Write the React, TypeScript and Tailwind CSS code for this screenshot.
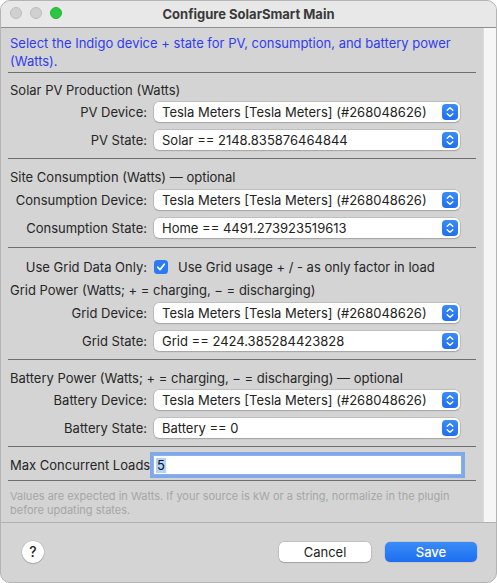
import React from 'react';

const font = "font-['Inter','Liberation_Sans',sans-serif]";

const Stepper = () => (
  <svg width="16" height="16" viewBox="0 0 16 16" className="shrink-0">
    <defs>
      <linearGradient id="stp" x1="0" y1="0" x2="0" y2="1">
        <stop offset="0" stopColor="#3b8cf7" />
        <stop offset="1" stopColor="#1f6ff0" />
      </linearGradient>
    </defs>
    <rect x="0" y="0" width="16" height="16" rx="4" fill="url(#stp)" />
    <path d="M5.2 6.3 L8 3.8 L10.8 6.3" stroke="#fff" strokeWidth="1.4" fill="none" strokeLinecap="round" strokeLinejoin="round" />
    <path d="M5.2 9.7 L8 12.2 L10.8 9.7" stroke="#fff" strokeWidth="1.4" fill="none" strokeLinecap="round" strokeLinejoin="round" />
  </svg>
);

const Popup = ({ value }: { value: string }) => (
  <div className="flex items-center h-[20px] w-[306px] bg-white rounded-[5px] shadow-[0_0_0_0.5px_rgba(0,0,0,0.2),0_1px_1.5px_rgba(0,0,0,0.15)] pl-[8px] pr-[2px]">
    <span className="flex-1 truncate text-[#222]">{value}</span>
    <Stepper />
  </div>
);

const Row = ({ label, value, className = '' }: { label: string; value: string; className?: string }) => (
  <div className={`flex items-center h-[20px] ${className}`}>
    <div className="w-[144px] pr-[7px] text-right text-[#262626]">{label}</div>
    <Popup value={value} />
  </div>
);

const Heading = ({ children, className = '' }: { children: React.ReactNode; className?: string }) => (
  <div className={`h-[18px] leading-[18px] text-[#262626] ${className}`}>{children}</div>
);

const Sep = ({ className = '' }: { className?: string }) => (
  <div className={`ml-[-2px] w-[468px] h-px bg-[#6e6e6e] ${className}`} />
);

export default function App() {
  return (
    <div className={`w-[497px] h-[583px] bg-white ${font} text-[13px] leading-[18px]`}>
      <div className="w-[497px] h-[583px] flex flex-col rounded-[10px] overflow-hidden bg-[#d4d4d4] border border-[#b4b4b4]">
        {/* title bar */}
        <div className="relative h-[27px] shrink-0 bg-[#e8e8e8] border-b border-[#8f8f8f] flex items-center justify-center">
          <div className="absolute left-[9px] top-[6px] flex gap-[8px]">
            <span className="w-[12px] h-[12px] rounded-full bg-[#d0d0d0] border border-[#bcbcbc]" />
            <span className="w-[12px] h-[12px] rounded-full bg-[#d0d0d0] border border-[#bcbcbc]" />
            <span className="w-[12px] h-[12px] rounded-full bg-[#2ac841] border border-[#25b03a]" />
          </div>
          <span className="font-bold text-[#3a3a3a] text-[13px]">Configure SolarSmart Main</span>
        </div>

        {/* scroll area */}
        <div className="flex h-[494px] shrink-0">
          <div className="w-[482px] pl-[9px] pt-[6px] flex flex-col">
            <div className="text-[#2f3cf2] leading-[18px] pr-[20px]">
              Select the Indigo device + state for PV, consumption, and battery power (Watts).
            </div>
            <Sep className="mt-[2px]" />

            <Heading className="mt-[8px]">Solar PV Production (Watts)</Heading>
            <Row className="mt-[3px]" label="PV Device:" value="Tesla Meters [Tesla Meters] (#268048626)" />
            <Row className="mt-[8px]" label="PV State:" value="Solar == 2148.835876464844" />
            <Sep className="mt-[8px]" />

            <Heading className="mt-[9px]">Site Consumption (Watts) — optional</Heading>
            <Row className="mt-[4px]" label="Consumption Device:" value="Tesla Meters [Tesla Meters] (#268048626)" />
            <Row className="mt-[8px]" label="Consumption State:" value="Home == 4491.273923519613" />
            <Sep className="mt-[9px]" />

            <div className="flex items-center h-[20px] mt-[9px]">
              <div className="w-[144px] pr-[7px] text-right text-[#262626]">Use Grid Data Only:</div>
              <span className="w-[14px] h-[14px] rounded-[3.5px] bg-[#2a7af5] flex items-center justify-center">
                <svg width="10" height="10" viewBox="0 0 10 10">
                  <path d="M1.8 5.2 L4 7.6 L8.3 2.2" stroke="#fff" strokeWidth="1.7" fill="none" strokeLinecap="round" strokeLinejoin="round" />
                </svg>
              </span>
              <span className="ml-[10px] text-[#262626]">Use Grid usage + / - as only factor in load</span>
            </div>
            <Heading className="mt-[4px]">Grid Power (Watts; + = charging, − = discharging)</Heading>
            <Row className="mt-[4px]" label="Grid Device:" value="Tesla Meters [Tesla Meters] (#268048626)" />
            <Row className="mt-[8px]" label="Grid State:" value="Grid == 2424.385284423828" />
            <Sep className="mt-[8px]" />

            <Heading className="mt-[9px]">Battery Power (Watts; + = charging, − = discharging) — optional</Heading>
            <Row className="mt-[3px]" label="Battery Device:" value="Tesla Meters [Tesla Meters] (#268048626)" />
            <Row className="mt-[8px]" label="Battery State:" value="Battery == 0" />
            <Sep className="mt-[8px]" />

            <div className="flex items-center h-[20px] mt-[8px]">
              <div className="w-[143px] text-[#262626]">Max Concurrent Loads</div>
              <div className="w-[309px] h-[20px] bg-white ring-[3px] ring-[#7fa9ea] border border-[#8fb0e6] flex items-center pl-[2px]">
                <span className="bg-[#b3d3fc] text-[#111] leading-[15px] px-px">5</span>
              </div>
            </div>
            <Sep className="mt-[5px]" />

            <div className="mt-[8px] text-[11px] leading-[14px] text-[#a6a6a6] pr-[20px]">
              Values are expected in Watts. If your source is kW or a string, normalize in the plugin before updating states.
            </div>
          </div>
          <div className="flex-1 bg-[#f6f6f6] border-l border-[#dcdcdc]" />
        </div>

        {/* footer */}
        <div className="flex-1 border-t border-[#b2b2b2] flex items-center pl-[21px] pr-[19px] pb-[2px]">
          <div className="w-[22px] h-[22px] rounded-full bg-white shadow-[0_0_0_0.5px_rgba(0,0,0,0.15),0_1px_1px_rgba(0,0,0,0.15)] flex items-center justify-center text-[14px] font-medium text-[#222]">
            ?
          </div>
          <div className="ml-auto flex gap-[14px]">
            <button className="w-[92px] h-[20px] rounded-[5px] bg-white text-[#222] leading-[20px] shadow-[0_0_0_0.5px_rgba(0,0,0,0.18),0_1px_1px_rgba(0,0,0,0.15)]">
              Cancel
            </button>
            <button className="w-[92px] h-[20px] rounded-[5px] bg-gradient-to-b from-[#3a8cf7] to-[#1d6ef0] text-white leading-[20px] font-medium shadow-[0_0_0_0.5px_rgba(0,0,0,0.12)]">
              Save
            </button>
          </div>
        </div>
      </div>
    </div>
  );
}
